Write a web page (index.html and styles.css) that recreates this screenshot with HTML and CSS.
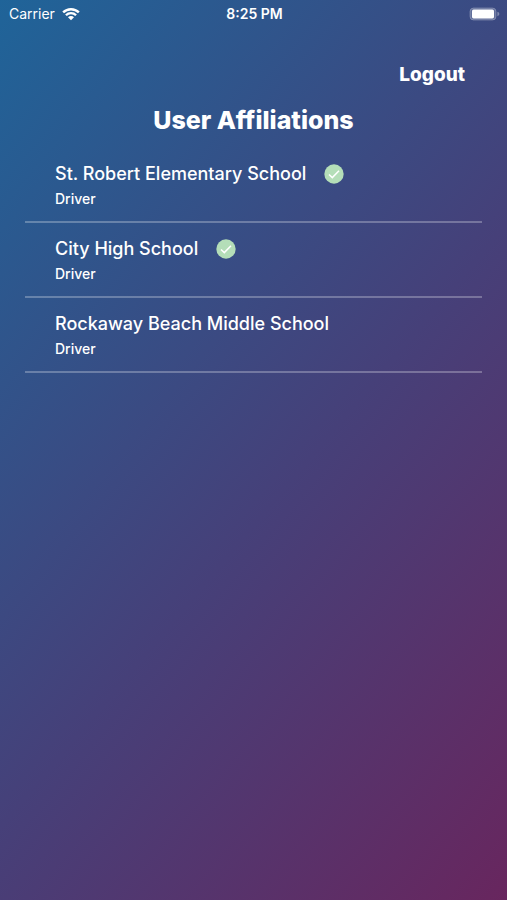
FILE: index.html
```html
<!DOCTYPE html>
<html lang="en">
<head>
    <meta charset="UTF-8">
    <meta name="viewport" content="width=device-width, initial-scale=1.0">
    <title>User Affiliations</title>
    <link rel="stylesheet" href="styles.css">
</head>
<body>
    <div class="status-bar">
        <div class="carrier">
            <span>Carrier</span>
            <svg class="wifi" viewBox="0 0 18 14" aria-hidden="true">
                <path d="M0.3 4.6 A12.3 12.3 0 0 1 17.7 4.6 L16 6.3 A9.9 9.9 0 0 0 2 6.3 Z"/>
                <path d="M3.1 7.4 A8.3 8.3 0 0 1 14.9 7.4 L13.2 9.1 A5.9 5.9 0 0 0 4.8 9.1 Z"/>
                <path d="M6 10.3 A4.2 4.2 0 0 1 12 10.3 L9 13.3 Z"/>
            </svg>
        </div>
        <span class="time">8:25 PM</span>
        <svg class="battery" viewBox="0 0 31 14" aria-hidden="true">
            <rect class="battery-case" x="1" y="1" width="26" height="12" rx="3.6"/>
            <rect x="3" y="2.6" width="22" height="8.8" rx="1.6"/>
            <path class="battery-tip" d="M28.4 4.8 Q30.4 5.4 30.4 7 Q30.4 8.6 28.4 9.2 Z"/>
        </svg>
    </div>

    <header class="toolbar">
        <button type="button" class="logout">Logout</button>
    </header>

    <main>
        <h1>User Affiliations</h1>
        <ul class="affiliations">
            <li>
                <div class="school">
                    <h2>St. Robert Elementary School</h2>
                    <svg class="check" viewBox="0 0 20 20" role="img" aria-label="Selected">
                        <circle cx="10" cy="10" r="9.7"/>
                        <path d="M5 10.5 L8.3 13.6 L15 6.8"/>
                    </svg>
                </div>
                <p>Driver</p>
            </li>
            <li>
                <div class="school">
                    <h2>City High School</h2>
                    <svg class="check" viewBox="0 0 20 20" role="img" aria-label="Selected">
                        <circle cx="10" cy="10" r="9.7"/>
                        <path d="M5 10.5 L8.3 13.6 L15 6.8"/>
                    </svg>
                </div>
                <p>Driver</p>
            </li>
            <li>
                <div class="school">
                    <h2>Rockaway Beach Middle School</h2>
                </div>
                <p>Driver</p>
            </li>
        </ul>
    </main>
</body>
</html>
```
FILE: styles.css
```css
* {
    box-sizing: border-box;
}

body {
    font-family: Inter, "Liberation Sans", sans-serif;
    color: #fff;
    margin: 0;
    min-height: 100vh;
    background: linear-gradient(130deg, #1f6499, #464079 55%, #68265e);
}

.status-bar {
    display: grid;
    grid-template-columns: 1fr auto 1fr;
    align-items: center;
    height: 27px;
    padding: 0 7px 0 9px;
    font-size: 14px;
}

.carrier {
    display: flex;
    align-items: center;
    gap: 7px;
}

.wifi {
    width: 18px;
    height: 14px;
    fill: #fff;
}

.time {
    font-weight: 600;
}

.battery {
    width: 31px;
    height: 14px;
    justify-self: end;
    fill: #fff;
}

.battery-case {
    fill: rgba(255, 255, 255, 0.2);
    stroke: rgba(255, 255, 255, 0.25);
}

.battery-tip {
    fill: rgba(255, 255, 255, 0.35);
}

.toolbar {
    display: flex;
    justify-content: flex-end;
    padding: 36px 42px 0;
}

.logout {
    padding: 0;
    border: 0;
    background: none;
    color: #fff;
    font-family: inherit;
    font-size: 19px;
    font-weight: 800;
    line-height: 24px;
    cursor: pointer;
}

h1 {
    margin: 17px 0 12px;
    font-size: 25px;
    font-weight: 800;
    line-height: 32px;
    text-align: center;
}

.affiliations {
    margin: 0 25px;
    padding: 0;
    list-style: none;
}

.affiliations li {
    padding: 12px 30px;
    border-bottom: 2px solid rgba(255, 255, 255, 0.27);
}

.school {
    display: flex;
    align-items: center;
    gap: 18px;
}

.school h2 {
    margin: 0;
    font-size: 18px;
    font-weight: 500;
    line-height: 28px;
}

.affiliations p {
    margin: 0;
    font-size: 14px;
    font-weight: 500;
    line-height: 21px;
}

.check {
    width: 20px;
    height: 20px;
}

.check circle {
    fill: #b4deb8;
}

.check path {
    fill: none;
    stroke: #fff;
    stroke-width: 1.5;
}
```
